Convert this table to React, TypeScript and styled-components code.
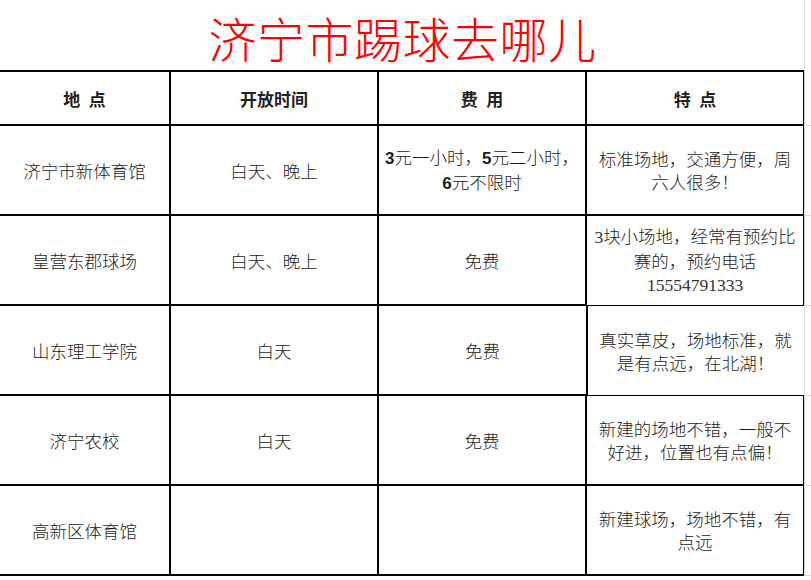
import React from "react";
import styled, { createGlobalStyle } from "styled-components";

const GlobalStyle = createGlobalStyle`
  html, body {
    margin: 0;
    padding: 0;
    background: #ffffff;
  }
  body {
    font-family: "Noto Sans CJK SC", "Liberation Sans", sans-serif;
    color: #1c1c1c;
  }
`;

const Sheet = styled.div`
  display: grid;
  grid-template-columns: 171px 208px 208px 218px 6px;
  grid-template-rows: 70px 56px repeat(5, 90px);
  width: 811px;
`;

const TitleBar = styled.div`
  grid-column: 1 / 5;
  display: flex;
  align-items: center;
  justify-content: center;
`;

const Title = styled.h1`
  margin: 0;
  padding-top: 4px;
  font-family: "Noto Sans CJK SC", sans-serif;
  font-weight: 300;
  font-size: 48px;
  line-height: 1;
  color: #ff0000;
  letter-spacing: 0.5px;
`;

const Gutter = styled.div<{ $line?: boolean }>`
  box-sizing: border-box;
  border-left: 1px solid #d4dbe7;
  border-bottom: ${(p) => (p.$line ? "1px solid #d4dbe7" : "none")};
  margin-left: -1px;
`;

const CellBase = styled.div`
  box-sizing: border-box;
  display: flex;
  align-items: center;
  justify-content: center;
  text-align: center;
  padding: 0 4px;
  font-size: 17.5px;
  line-height: 23px;
  white-space: nowrap;
  border-right: 2px solid #000;
  border-bottom: 2px solid #000;
`;

const HeadCell = styled(CellBase)`
  border-top: 2px solid #000;
  font-weight: 700;
  font-size: 17px;
  color: #222;
`;

const Cell = styled(CellBase)<{
  $thinRight?: boolean;
  $thinBottom?: boolean;
  $thinLeft?: boolean;
}>`
  border-right-width: ${(p) => (p.$thinRight ? "1px" : "2px")};
  border-bottom-width: ${(p) => (p.$thinBottom ? "1px" : "2px")};
  ${(p) => (p.$thinLeft ? "border-left: 1px solid #000; padding-right: 5px;" : "")}
  font-weight: 300;
`;

const CellText = styled.div`
  display: block;
`;

const Num = styled.span`
  font-family: "Liberation Sans", sans-serif;
  font-weight: 700;
  font-size: 17px;
`;

const Serif = styled.span`
  font-family: "Liberation Serif", serif;
  font-weight: 400;
  font-size: 17.5px;
  color: #333;
`;

type Row = {
  place: React.ReactNode;
  time: React.ReactNode;
  fee: React.ReactNode;
  note: React.ReactNode;
  thinNote?: boolean;
};

const rows: Row[] = [
  {
    place: "济宁市新体育馆",
    time: "白天、晚上",
    fee: (
      <>
        <Num>3</Num>元一小时，<Num>5</Num>元二小时，
        <br />
        <Num>6</Num>元不限时
      </>
    ),
    note: (
      <>
        标准场地，交通方便，周
        <br />
        六人很多！
      </>
    ),
  },
  {
    place: "皇营东郡球场",
    time: "白天、晚上",
    fee: "免费",
    note: (
      <>
        <Serif>3</Serif>块小场地，经常有预约比
        <br />
        赛的，预约电话
        <br />
        <Serif>15554791333</Serif>
      </>
    ),
  },
  {
    place: "山东理工学院",
    time: "白天",
    fee: "免费",
    thinNote: true,
    note: (
      <>
        真实草皮，场地标准，就
        <br />
        是有点远，在北湖！
      </>
    ),
  },
  {
    place: "济宁农校",
    time: "白天",
    fee: "免费",
    note: (
      <>
        新建的场地不错，一般不
        <br />
        好进，位置也有点偏！
      </>
    ),
  },
  {
    place: "高新区体育馆",
    time: "",
    fee: "",
    note: (
      <>
        新建球场，场地不错，有
        <br />
        点远
      </>
    ),
  },
];

export default function App() {
  return (
    <>
      <GlobalStyle />
      <Sheet>
        <TitleBar>
          <Title>济宁市踢球去哪儿</Title>
        </TitleBar>
        <Gutter />

        <HeadCell>地&ensp;点</HeadCell>
        <HeadCell>开放时间</HeadCell>
        <HeadCell>费&ensp;用</HeadCell>
        <HeadCell>特&ensp;点</HeadCell>
        <Gutter $line />

        {rows.map((r, i) => {
          const next = rows[i + 1];
          return (
            <React.Fragment key={i}>
              <Cell>
                <CellText>{r.place}</CellText>
              </Cell>
              <Cell>
                <CellText>{r.time}</CellText>
              </Cell>
              <Cell $thinRight={r.thinNote}>
                <CellText>{r.fee}</CellText>
              </Cell>
              <Cell
                $thinRight={r.thinNote}
                $thinBottom={r.thinNote || next?.thinNote}
                $thinLeft={r.thinNote}
              >
                <CellText>{r.note}</CellText>
              </Cell>
              <Gutter $line />
            </React.Fragment>
          );
        })}
      </Sheet>
    </>
  );
}
